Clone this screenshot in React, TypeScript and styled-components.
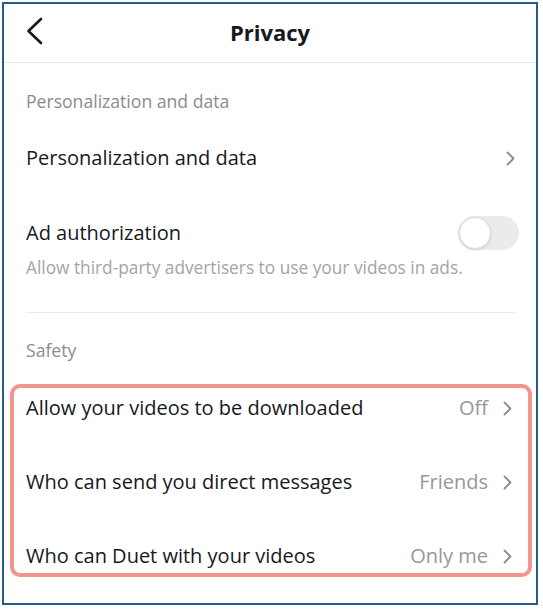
import { FC } from "react"
import styled, { createGlobalStyle } from "styled-components"

const GlobalStyle = createGlobalStyle`
    html, body {
        margin: 0;
        padding: 0;
        background: #ffffff;
    }
    body {
        padding: 2px;
        font-family: "Open Sans", "Liberation Sans", sans-serif;
        color: #161823;
        -webkit-font-smoothing: antialiased;
    }
`

const Frame = styled.div`
    box-sizing: border-box;
    width: 536px;
    height: 603px;
    border: 2px solid #275b8b;
    background: #ffffff;
    display: flex;
    flex-direction: column;
`

const Header = styled.header`
    height: 58px;
    display: grid;
    grid-template-columns: 60px 1fr 60px;
    align-items: center;
    border-bottom: 1px solid #e8e8ea;
`

const BackButton = styled.button`
    border: none;
    background: none;
    padding: 0 0 4px 21px;
    height: 40px;
    display: flex;
    align-items: center;
    cursor: pointer;
`

const Title = styled.h1`
    margin: 0 0 3px;
    text-align: center;
    font-size: 22px;
    line-height: 28px;
    font-weight: 700;
    color: #161823;
`

const Content = styled.div`
    padding: 0 19px 0 22px;
    display: flex;
    flex-direction: column;
`

const SectionTitle = styled.div<{ top: number; bottom: number }>`
    padding-top: ${p => p.top}px;
    padding-bottom: ${p => p.bottom}px;
    font-size: 17.6px;
    line-height: 20px;
    color: #8a8b91;
`

const Row = styled.div<{ height: number }>`
    height: ${p => p.height}px;
    display: flex;
    align-items: center;
    justify-content: space-between;
`

const RowLabel = styled.span`
    font-size: 20px;
    line-height: 24px;
    color: #161823;
`

const RowEnd = styled.span`
    display: flex;
    align-items: center;
    gap: 15px;
    padding-right: 2px;
`

const RowValue = styled.span`
    font-size: 20px;
    line-height: 24px;
    color: #97989d;
`

const ToggleBlock = styled.div`
    padding: 30px 0 34px;
    border-bottom: 1px solid #ececee;
`

const Description = styled.div`
    margin-top: 8px;
    font-size: 17.3px;
    line-height: 20px;
    color: #a3a4a8;
`

const Track = styled.div`
    box-sizing: border-box;
    width: 61px;
    height: 34px;
    border-radius: 17px;
    background: #ebebed;
    padding: 1px;
    margin-right: -2px;
`

const Knob = styled.div`
    box-sizing: border-box;
    width: 32px;
    height: 32px;
    border-radius: 50%;
    background: #ffffff;
    border: 1px solid #dedede;
    box-shadow: 0 1px 3px rgba(0, 0, 0, 0.14);
`

const Highlight = styled.div`
    margin: 0 -15px 0 -16px;
    padding: 3px 14px 0 12px;
    border: 4px solid #f2958d;
    border-radius: 10px;
    display: flex;
    flex-direction: column;
    gap: 40px;
`

const Chevron: FC = () => (
    <svg width="9" height="15" viewBox="0 0 9 15" fill="none">
        <path d="M1.5 1.5L7.5 7.5L1.5 13.5" stroke="#8a8b91" strokeWidth="1.8" strokeLinecap="round" strokeLinejoin="round" />
    </svg>
)

const BackIcon: FC = () => (
    <svg width="18" height="28" viewBox="0 0 18 28" fill="none">
        <path d="M16 2L3.5 14L16 26" stroke="#161823" strokeWidth="2.6" strokeLinecap="round" strokeLinejoin="round" />
    </svg>
)

interface SettingRowProps {
    readonly label: string
    readonly value?: string
}

const SettingRow: FC<SettingRowProps> = ({ label, value }) => (
    <Row height={34}>
        <RowLabel>{label}</RowLabel>
        <RowEnd>
            {value && <RowValue>{value}</RowValue>}
            <Chevron />
        </RowEnd>
    </Row>
)

const App: FC = () => (
    <>
        <GlobalStyle />
        <Frame>
            <Header>
                <BackButton aria-label="Back">
                    <BackIcon />
                </BackButton>
                <Title>Privacy</Title>
                <span />
            </Header>
            <Content>
                <SectionTitle top={28} bottom={19}>Personalization and data</SectionTitle>
                <Row height={56}>
                    <RowLabel>Personalization and data</RowLabel>
                    <RowEnd>
                        <Chevron />
                    </RowEnd>
                </Row>
                <ToggleBlock>
                    <Row height={34}>
                        <RowLabel>Ad authorization</RowLabel>
                        <Track>
                            <Knob />
                        </Track>
                    </Row>
                    <Description>Allow third-party advertisers to use your videos in ads.</Description>
                </ToggleBlock>
                <SectionTitle top={27} bottom={24}>Safety</SectionTitle>
                <Highlight>
                    <SettingRow label="Allow your videos to be downloaded" value="Off" />
                    <SettingRow label="Who can send you direct messages" value="Friends" />
                    <SettingRow label="Who can Duet with your videos" value="Only me" />
                </Highlight>
            </Content>
        </Frame>
    </>
)

export default App
